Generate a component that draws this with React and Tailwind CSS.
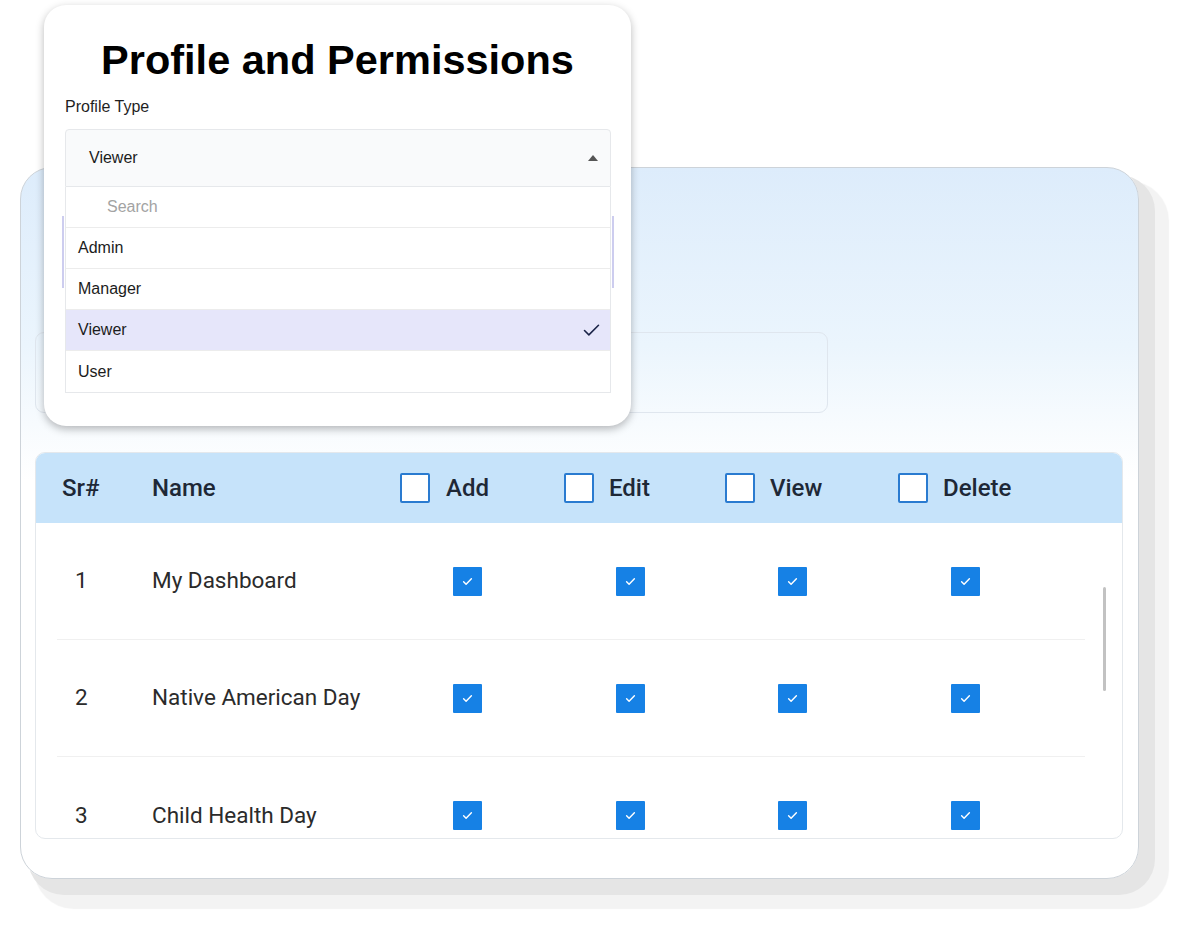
import { Check } from 'lucide-react'

const rows = [
  { sr: 1, name: 'My Dashboard' },
  { sr: 2, name: 'Native American Day' },
  { sr: 3, name: 'Child Health Day' },
]

const options = ['Admin', 'Manager', 'Viewer', 'User']

function Ticked() {
  return (
    <span className="flex w-[29px] h-[29px] items-center justify-center bg-[#1681e5] rounded-[1px]">
      <svg viewBox="0 0 24 24" className="w-[17px] h-[17px]" fill="none" stroke="white" strokeWidth="2" strokeLinecap="round" strokeLinejoin="round">
        <path d="M6.5 12.5l3.5 3.5 7.5-8" />
      </svg>
    </span>
  )
}

function HeadBox() {
  return <span className="block w-[30px] h-[30px] bg-white border-2 border-[#2a7bd0] rounded-[2px]" />
}

export default function App() {
  return (
    <div className="relative h-[933px] w-[1194px] overflow-hidden bg-white" style={{ fontFamily: 'Roboto, "Liberation Sans", sans-serif' }}>
      {/* Main card */}
      <div className="ml-[20px] mt-[167px] w-[1119px] h-[712px] rounded-[32px] border border-[#cdd3d9] bg-[linear-gradient(180deg,#ddecfb_0%,#ebf5fd_25%,#f7fbfe_36%,#ffffff_44%)] shadow-[12px_12px_0_4px_#e5e5e5,22px_22px_1px_8px_#f3f3f3] px-[14px] pt-[164px]">
        <div className="w-[793px] h-[81px] rounded-[9px] border border-[#dfe6ee]" />

        {/* Table */}
        <div className="mt-[39px] w-[1088px] h-[387px] rounded-[10px] border border-[#e4e8ec] bg-white overflow-hidden">
          <div className="flex items-center h-[70px] bg-[#c6e3fa] pl-[26px] text-[24px] font-medium text-[#1e2836]">
            <span className="w-[90px]">Sr#</span>
            <span className="w-[248px]">Name</span>
            <span className="w-[164px] flex items-center gap-[16px]"><HeadBox />Add</span>
            <span className="w-[161px] flex items-center gap-[15px]"><HeadBox />Edit</span>
            <span className="w-[173px] flex items-center gap-[15px]"><HeadBox />View</span>
            <span className="flex items-center gap-[15px]"><HeadBox />Delete</span>
          </div>

          <div className="relative h-[317px] overflow-hidden">
            <div className="absolute right-[16px] top-[64px] w-[3px] h-[104px] rounded-full bg-[#c2c2c2]" />
            {rows.map((r, i) => (
              <div key={r.sr} className={`flex items-center h-[117px] ml-[21px] mr-[37px] pl-[18px] text-[22.5px] text-[#2b2b2b] ${i < rows.length - 1 ? 'border-b border-[#f0f0f0]' : ''}`}>
                <span className="w-[77px]">{r.sr}</span>
                <span className="w-[301px]">{r.name}</span>
                <span className="w-[163px]"><Ticked /></span>
                <span className="w-[162px]"><Ticked /></span>
                <span className="w-[173px]"><Ticked /></span>
                <span><Ticked /></span>
              </div>
            ))}
          </div>
        </div>
      </div>

      {/* Profile popup */}
      <div className="absolute left-[44px] top-[5px] w-[587px] h-[421px] rounded-[22px] bg-white shadow-[0_3px_9px_rgba(0,0,0,0.28)] px-[21px] pt-[30px]" style={{ fontFamily: '"Liberation Sans", Arial, sans-serif' }}>
        <h1 className="text-center text-[41.5px] leading-[50px] font-bold text-black">Profile and Permissions</h1>
        <p className="mt-[12px] text-[16px] leading-[20px] text-[#1f1f1f]">Profile Type</p>

        <div className="relative mt-[12px] w-[546px]">
          <div className="absolute left-[-3px] top-[87px] w-[552px] h-[72px] border-x-2 border-[#cdcdef]" />
          <div className="relative flex items-center justify-between h-[58px] pl-[23px] pr-[12px] bg-[#f9fafb] border border-[#e6e8eb] rounded-t-[4px] text-[16px] text-[#1c1c1c]">
            <span>Viewer</span>
            <span className="w-0 h-0 border-x-[5px] border-x-transparent border-b-[6px] border-b-[#555]" />
          </div>
          <div className="relative bg-white border-x border-b border-[#e6e8eb] text-[16px] text-[#1c1c1c]">
            <div className="flex items-center h-[41px] pl-[41px] border-b border-[#ececec] text-[#a3a3a3]">Search</div>
            {options.map((o) => (
              <div key={o} className={`flex items-center justify-between h-[41px] pl-[12px] pr-[8px] border-b border-[#ececec] last:border-b-0 ${o === 'Viewer' ? 'bg-[#e6e6fa]' : ''}`}>
                <span>{o}</span>
                {o === 'Viewer' && <Check size={21} strokeWidth={1.8} className="text-[#1b2448]" />}
              </div>
            ))}
          </div>
        </div>
      </div>
    </div>
  )
}
